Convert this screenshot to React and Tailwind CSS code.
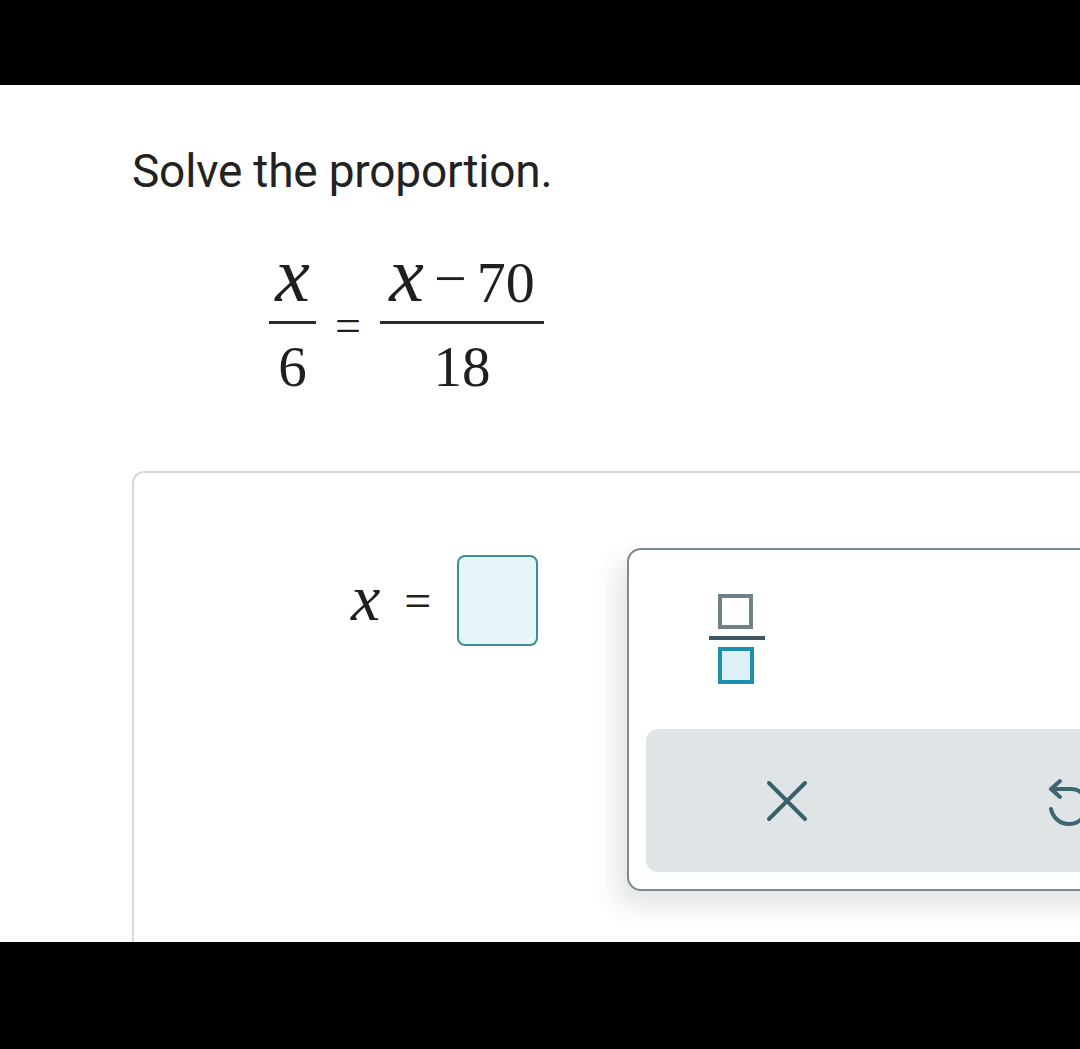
import React from 'react'

const serif = { fontFamily: '"Liberation Serif", "DejaVu Serif", serif' }

const Frac = ({ num, den, width }) => (
  <div className="flex flex-col items-center">
    <div className="h-[62px] flex items-end justify-center leading-none">{num}</div>
    <div className={`h-[3px] bg-[#2b2b2b] mt-[7px] ${width}`} />
    <div className="h-[71px] flex items-end justify-center leading-none text-[57px]">{den}</div>
  </div>
)

const MathX = ({ size }) => (
  <span className={`italic ${size} leading-none`}>x</span>
)

const FractionIcon = () => (
  <svg width="56" height="92" viewBox="0 0 56 92" fill="none">
    <rect x="11" y="2" width="31" height="31" stroke="#6f8189" strokeWidth="4" fill="#ffffff" />
    <rect x="0" y="42" width="56" height="4" fill="#3e5761" />
    <rect x="11" y="55" width="32" height="33" stroke="#1a91a8" strokeWidth="4" fill="#dcf0f5" />
  </svg>
)

const UndoIcon = () => (
  <svg width="44" height="52" viewBox="0 0 44 52" fill="none" stroke="#3d6670" strokeWidth="4" strokeLinecap="round" strokeLinejoin="round">
    <path d="M13 3 L4 11 L13 19" />
    <path d="M4 11 H24 C34 11 40 19 40 28 C40 38 32 46 22 46 C13 46 6 40 4 31" />
  </svg>
)

export default function App() {
  return (
    <div className="w-[1080px] h-[1049px] bg-black overflow-hidden" style={{ fontFamily: 'Roboto, "Liberation Sans", sans-serif' }}>
      <div className="h-[85px] bg-black" />

      <div className="h-[857px] bg-white overflow-hidden pl-[132px] pt-[63px]">
        <h1 className="text-[46px] text-[#222222] leading-none tracking-[-0.2px]">Solve the proportion.</h1>

        {/* Proportion */}
        <div className="flex items-start mt-[58px] ml-[137px] text-[#1f1f1f]" style={serif}>
          <Frac num={<MathX size="text-[78px]" />} den="6" width="w-[47px]" />
          <div className="mt-[51px] mx-[19px] text-[46px] leading-none">=</div>
          <Frac
            num={
              <span className="flex items-end gap-[10px]">
                <MathX size="text-[78px]" />
                <span className="text-[58px] leading-none mb-[6px]">−</span>
                <span className="text-[58px] leading-none mb-[2px]">70</span>
              </span>
            }
            den="18"
            width="w-[164px]"
          />
        </div>

        {/* Answer card */}
        <div className="relative mt-[76px] w-[1000px] h-[520px] border-2 border-[#d6dadc] rounded-[12px]">
          <div className="flex items-center ml-[217px] mt-[82px] gap-[24px] text-[#1f1f1f]" style={serif}>
            <span className="italic text-[66px] leading-none -mt-[6px]">x</span>
            <span className="text-[48px] leading-none">=</span>
            <div className="w-[81px] h-[91px] border-2 border-[#3f8d9b] bg-[#e6f5f8] rounded-[8px] ml-[2px]" />
          </div>

          {/* Keypad popover */}
          <div className="absolute left-[493px] top-[75px] w-[600px] h-[343px] bg-white border-2 border-[#7b8b91] rounded-[14px] shadow-[-10px_14px_26px_rgba(40,60,70,0.14)]">
            <div className="ml-[80px] mt-[44px]">
              <FractionIcon />
            </div>
            <div className="absolute left-[17px] top-[179px] right-[-40px] h-[143px] bg-[#dfe5e7] rounded-[12px] flex">
              <div className="w-[282px] flex items-center justify-center">
                <svg width="42" height="42" viewBox="0 0 42 42" stroke="#3d5f6a" strokeWidth="4" strokeLinecap="round">
                  <path d="M3 3 L39 39 M39 3 L3 39" />
                </svg>
              </div>
              <div className="w-[282px] flex items-center justify-center pt-[6px]">
                <UndoIcon />
              </div>
            </div>
          </div>
        </div>
      </div>
    </div>
  )
}
